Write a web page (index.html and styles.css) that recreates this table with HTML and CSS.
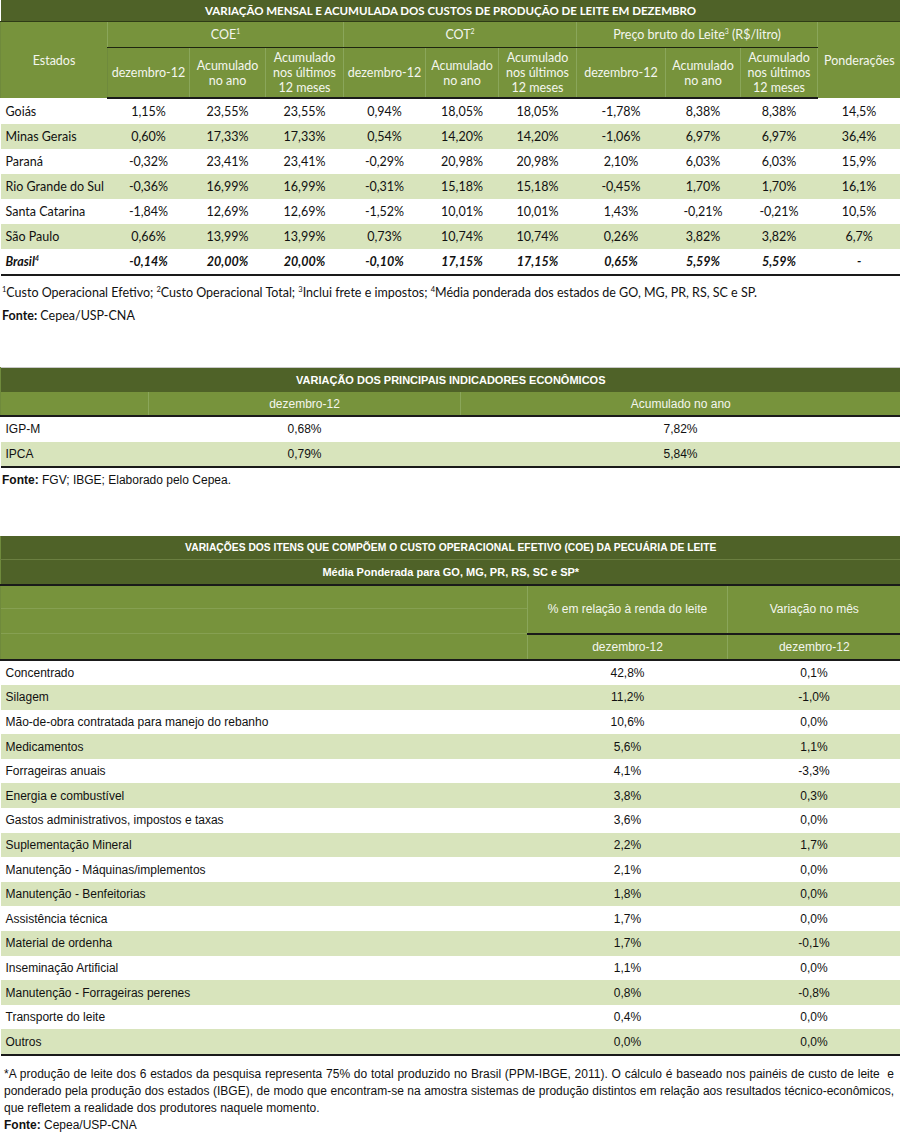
FILE: index.html
```html
<!DOCTYPE html>
<html lang="pt-BR">
<head>
<meta charset="utf-8">
<title>Custos de produção de leite</title>
<link rel="stylesheet" href="styles.css">
</head>
<body>
<section class="block block-one">
  <table class="t1">
    <colgroup>
      <col style="width:107px"><col style="width:82px"><col style="width:76px"><col style="width:78px">
      <col style="width:82px"><col style="width:73px"><col style="width:78px">
      <col style="width:89px"><col style="width:75px"><col style="width:77px"><col style="width:83px">
    </colgroup>
    <thead>
      <tr class="title"><th colspan="11">VARIAÇÃO MENSAL E ACUMULADA DOS CUSTOS DE PRODUÇÃO DE LEITE EM DEZEMBRO</th></tr>
      <tr class="grp">
        <th rowspan="2" class="sep">Estados</th>
        <th colspan="3" class="sep gline">COE<sup>1</sup></th>
        <th colspan="3" class="sep gline">COT<sup>2</sup></th>
        <th colspan="3" class="sep gline">Preço bruto do Leite<sup>3</sup> (R$/litro)</th>
        <th rowspan="2" class="sep">Ponderações</th>
      </tr>
      <tr class="sub">
        <th class="sep">dezembro-12</th><th class="sep">Acumulado<br>no ano</th><th class="sep">Acumulado<br>nos últimos<br>12 meses</th>
        <th class="sep">dezembro-12</th><th class="sep">Acumulado<br>no ano</th><th class="sep">Acumulado<br>nos últimos<br>12 meses</th>
        <th class="sep">dezembro-12</th><th class="sep">Acumulado<br>no ano</th><th class="sep">Acumulado<br>nos últimos<br>12 meses</th>
      </tr>
    </thead>
    <tbody>
      <tr><td>Goiás</td><td>1,15%</td><td>23,55%</td><td>23,55%</td><td>0,94%</td><td>18,05%</td><td>18,05%</td><td>-1,78%</td><td>8,38%</td><td>8,38%</td><td>14,5%</td></tr>
      <tr class="alt"><td>Minas Gerais</td><td>0,60%</td><td>17,33%</td><td>17,33%</td><td>0,54%</td><td>14,20%</td><td>14,20%</td><td>-1,06%</td><td>6,97%</td><td>6,97%</td><td>36,4%</td></tr>
      <tr><td>Paraná</td><td>-0,32%</td><td>23,41%</td><td>23,41%</td><td>-0,29%</td><td>20,98%</td><td>20,98%</td><td>2,10%</td><td>6,03%</td><td>6,03%</td><td>15,9%</td></tr>
      <tr class="alt"><td>Rio Grande do Sul</td><td>-0,36%</td><td>16,99%</td><td>16,99%</td><td>-0,31%</td><td>15,18%</td><td>15,18%</td><td>-0,45%</td><td>1,70%</td><td>1,70%</td><td>16,1%</td></tr>
      <tr><td>Santa Catarina</td><td>-1,84%</td><td>12,69%</td><td>12,69%</td><td>-1,52%</td><td>10,01%</td><td>10,01%</td><td>1,43%</td><td>-0,21%</td><td>-0,21%</td><td>10,5%</td></tr>
      <tr class="alt"><td>São Paulo</td><td>0,66%</td><td>13,99%</td><td>13,99%</td><td>0,73%</td><td>10,74%</td><td>10,74%</td><td>0,26%</td><td>3,82%</td><td>3,82%</td><td>6,7%</td></tr>
      <tr class="total"><td>Brasil<sup>4</sup></td><td>-0,14%</td><td>20,00%</td><td>20,00%</td><td>-0,10%</td><td>17,15%</td><td>17,15%</td><td>0,65%</td><td>5,59%</td><td>5,59%</td><td>-</td></tr>
    </tbody>
  </table>
  <p class="note1"><sup>1</sup>Custo Operacional Efetivo; <sup>2</sup>Custo Operacional Total; <sup>3</sup>Inclui frete e impostos; <sup>4</sup>Média ponderada dos estados de GO, MG, PR, RS, SC e SP.</p>
  <p class="src1"><b>Fonte:</b> Cepea/USP-CNA</p>
</section>

<section class="block block-two">
  <table class="t2">
    <colgroup><col style="width:148px"><col style="width:312px"><col style="width:440px"></colgroup>
    <thead>
      <tr class="title"><th colspan="3" class="sep">VARIAÇÃO DOS PRINCIPAIS INDICADORES ECONÔMICOS</th></tr>
      <tr class="sub"><th class="sep"></th><th class="sep">dezembro-12</th><th class="sep">Acumulado no ano</th></tr>
    </thead>
    <tbody>
      <tr><td>IGP-M</td><td>0,68%</td><td>7,82%</td></tr>
      <tr class="alt"><td>IPCA</td><td>0,79%</td><td>5,84%</td></tr>
    </tbody>
  </table>
  <p class="src2"><b>Fonte:</b> FGV; IBGE; Elaborado pelo Cepea.</p>
</section>

<section class="block block-three">
  <table class="t3">
    <colgroup><col style="width:527px"><col style="width:200px"><col style="width:173px"></colgroup>
    <thead>
      <tr class="title"><th colspan="3" class="sep">VARIAÇÕES DOS ITENS QUE COMPÕEM O CUSTO OPERACIONAL EFETIVO (COE) DA PECUÁRIA DE LEITE</th></tr>
      <tr class="title2"><th colspan="3" class="sep">Média Ponderada para GO, MG, PR, RS, SC e SP*</th></tr>
      <tr class="h-a"><th class="sep"></th><th rowspan="2" class="sep gline">% em relação à renda do leite</th><th rowspan="2" class="sep gline">Variação no mês</th></tr>
      <tr class="h-b"><th class="sep hl"></th></tr>
      <tr class="h-c"><th class="sep hl"></th><th class="sep">dezembro-12</th><th class="sep">dezembro-12</th></tr>
    </thead>
    <tbody>
      <tr><td>Concentrado</td><td>42,8%</td><td>0,1%</td></tr>
      <tr class="alt"><td>Silagem</td><td>11,2%</td><td>-1,0%</td></tr>
      <tr><td>Mão-de-obra contratada para manejo do rebanho</td><td>10,6%</td><td>0,0%</td></tr>
      <tr class="alt"><td>Medicamentos</td><td>5,6%</td><td>1,1%</td></tr>
      <tr><td>Forrageiras anuais</td><td>4,1%</td><td>-3,3%</td></tr>
      <tr class="alt"><td>Energia e combustível</td><td>3,8%</td><td>0,3%</td></tr>
      <tr><td>Gastos administrativos, impostos e taxas</td><td>3,6%</td><td>0,0%</td></tr>
      <tr class="alt"><td>Suplementação Mineral</td><td>2,2%</td><td>1,7%</td></tr>
      <tr><td>Manutenção - Máquinas/implementos</td><td>2,1%</td><td>0,0%</td></tr>
      <tr class="alt"><td>Manutenção - Benfeitorias</td><td>1,8%</td><td>0,0%</td></tr>
      <tr><td>Assistência técnica</td><td>1,7%</td><td>0,0%</td></tr>
      <tr class="alt"><td>Material de ordenha</td><td>1,7%</td><td>-0,1%</td></tr>
      <tr><td>Inseminação Artificial</td><td>1,1%</td><td>0,0%</td></tr>
      <tr class="alt"><td>Manutenção - Forrageiras perenes</td><td>0,8%</td><td>-0,8%</td></tr>
      <tr><td>Transporte do leite</td><td>0,4%</td><td>0,0%</td></tr>
      <tr class="alt"><td>Outros</td><td>0,0%</td><td>0,0%</td></tr>
    </tbody>
  </table>
  <p class="note3">*A produção de leite dos 6 estados da pesquisa representa 75% do total produzido no Brasil (PPM-IBGE, 2011). O cálculo é baseado nos painéis de custo de leite&nbsp; e ponderado pela produção dos estados (IBGE), de modo que encontram-se na amostra sistemas de produção distintos em relação aos resultados técnico-econômicos, que refletem a realidade dos produtores naquele momento.</p>
  <p class="src3"><b>Fonte:</b> Cepea/USP-CNA</p>
</section>
</body>
</html>
```

FILE: styles.css
```css
html, body {
  margin: 0;
  padding: 0;
  background: #ffffff;
}
body {
  width: 900px;
  color: #111111;
  font-family: "Lato", "Open Sans", sans-serif;
}
p { margin: 0; }

table {
  width: 900px;
  border-collapse: collapse;
  table-layout: fixed;
}
th, td {
  padding: 0;
  vertical-align: middle;
  text-align: center;
  white-space: nowrap;
}
th {
  color: #f4f6ee;
  font-weight: normal;
  background: #77933c;
}
.title th {
  background: #4f6228;
  font-weight: bold;
  color: #ffffff;
}
th.sep { border-left: 1px solid #8aa65a; }
th.sep:first-child { border-left: 1px solid #6f8a3c; }
sup {
  font-size: 0.55em;
  vertical-align: 0.7em;
  line-height: 0;
}
td:first-child { text-align: left; padding-left: 5px; }
tr.alt td { background: #d8e4bc; }

/* ---------- table 1 ---------- */
.t1 { font-size: 12.5px; }
.t1 .title th { height: 21px; font-size: 11.5px; border-bottom: 1px solid #2f3b16; }
.t1 .grp th { height: 25px; }
.t1 .grp th.gline { border-bottom: 1px solid #1f2610; }
.t1 .sub th { height: 49px; line-height: 15px; border-bottom: 2px solid #1a1a1a; }
.t1 td { height: 25px; }
.t1 tr.total td { font-weight: bold; font-style: italic; border-bottom: 2px solid #1a1a1a; }

.note1 {
  margin-top: 9px;
  padding-left: 2px;
  font-size: 12.5px;
  line-height: 16px;
}
.note1 sup { font-size: 0.6em; }
.src1 {
  margin-top: 7px;
  padding-left: 2px;
  font-size: 12.5px;
  line-height: 16px;
}

/* condensed-looking tables */
.t2, .t3, .src2, .note3, .src3 {
  font-family: "Liberation Sans", Arial, sans-serif;
}

/* ---------- table 2 ---------- */
.block-two { margin-top: 43px; }
.t2 { font-size: 12px; border-top: 1px solid #c8c8c8; }
.t2 .title th { height: 24px; font-size: 11px; }
.t2 .sub th { height: 23px; border-bottom: 2px solid #1a1a1a; }
.t2 td { height: 24.5px; }
.t2 tr.alt td { border-bottom: 2px solid #1a1a1a; }
.src2 {
  margin-top: 4px;
  padding-left: 2px;
  font-size: 12px;
  line-height: 16px;
}

/* ---------- table 3 ---------- */
.block-three { margin-top: 48px; }
.t3 { font-size: 12px; }
.t3 .title th { height: 23px; font-size: 10.3px; border-bottom: 1px solid #6b7f41; }
.t3 .title2 th { height: 24px; background: #4f6228; color: #ffffff; font-weight: bold; font-size: 11px; border-bottom: 2px solid #1a1a1a; }
.t3 .h-a th { height: 22px; }
.t3 .h-b th { height: 24px; }
.t3 .h-a th.gline { border-bottom: 2px solid #1a1a1a; }
.t3 th.hl { border-top: 1px solid #86a052; }
.t3 .h-c th { height: 24px; border-bottom: 2px solid #1a1a1a; }
.t3 td { height: 24.6px; }
.t3 tbody tr:last-child td { border-bottom: 2px solid #1a1a1a; }

.note3 {
  margin-top: 10px;
  padding: 0 6px 0 4px;
  font-size: 12px;
  line-height: 17px;
  text-align: justify;
}
.src3 {
  padding-left: 4px;
  font-size: 12px;
  line-height: 16px;
}
```
